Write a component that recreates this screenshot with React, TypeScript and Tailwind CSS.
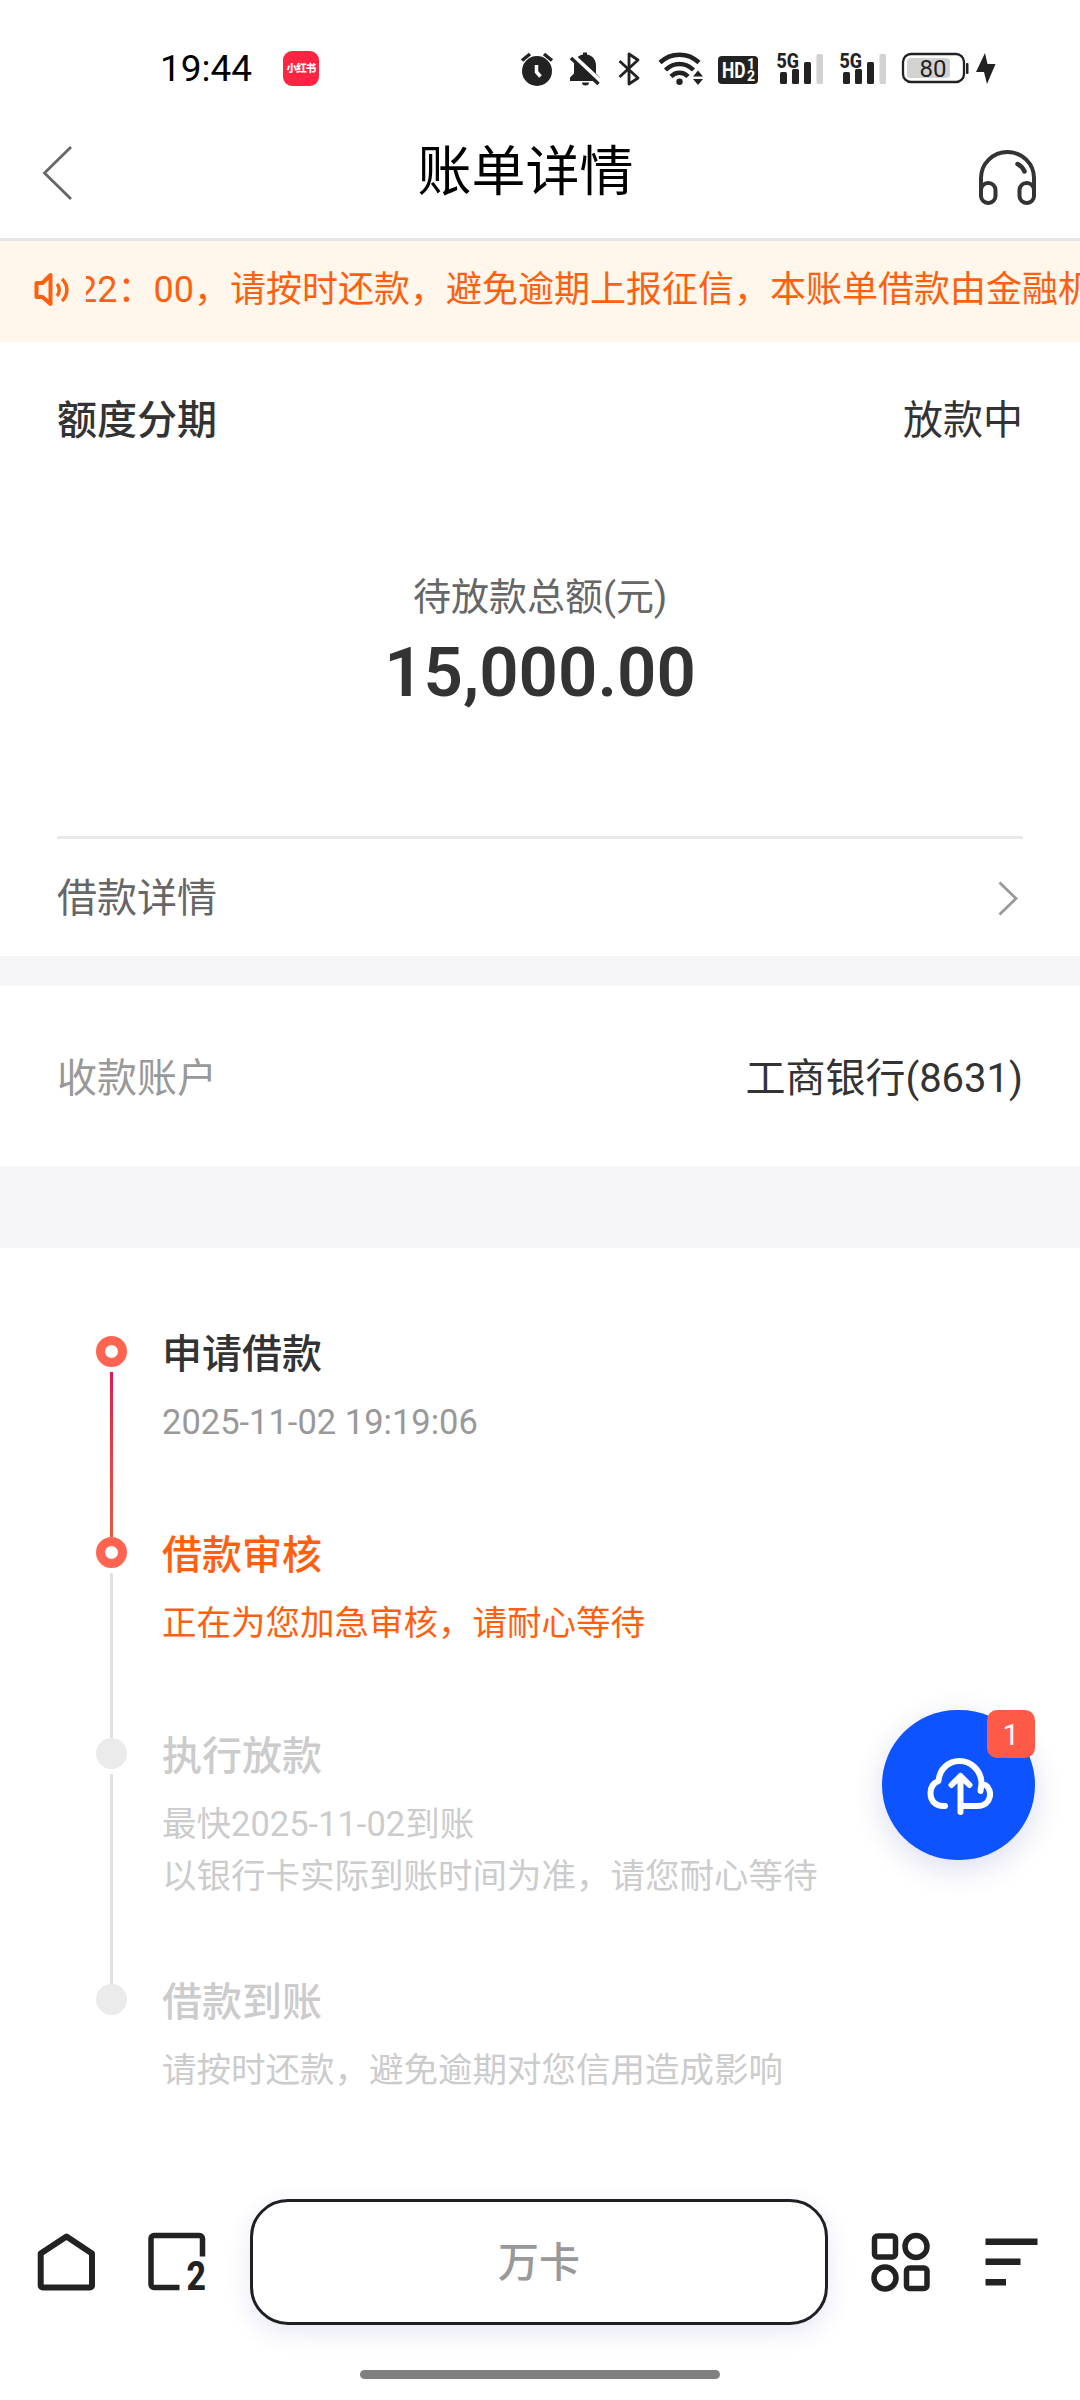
import type { ReactNode } from "react";

type StepState = "done" | "active" | "pending";

interface Step {
  title: string;
  lines: string[];
  state: StepState;
  height: string;
}

const steps: Step[] = [
  { title: "申请借款", lines: ["2025-11-02 19:19:06"], state: "done", height: "h-[201px]" },
  { title: "借款审核", lines: ["正在为您加急审核，请耐心等待"], state: "active", height: "h-[201px]" },
  {
    title: "执行放款",
    lines: ["最快2025-11-02到账", "以银行卡实际到账时间为准，请您耐心等待"],
    state: "pending",
    height: "h-[246px]",
  },
  { title: "借款到账", lines: ["请按时还款，避免逾期对您信用造成影响"], state: "pending", height: "h-[150px]" },
];

const titleColor = {
  done: "text-[#333333]",
  active: "text-[#ff6010]",
  pending: "text-[#cccccc]",
};

const lineColor = {
  done: "text-[#999999]",
  active: "text-[#ff6010]",
  pending: "text-[#cccccc]",
};

function StatusIcons() {
  return (
    <svg width="490" height="50" viewBox="510 45 490 50" fill="#222" className="block">
      {/* alarm */}
      <circle cx="537" cy="71" r="15" />
      <path d="M522 60.500l8-6.500M544 54l8 6.500" stroke="#222" strokeWidth="3.500" />
      <path d="M536.500 65v7l4 4.500" stroke="#fff" strokeWidth="3.500" fill="none" />
      {/* muted bell */}
      <path d="M583 52.500h4v2c6 1 9 6 9 11v8l4 4v3.500h-30V77.500l4-4v-8c0-5 3-10 9-11z" />
      <path d="M582 82.500h7a3.500 3 0 0 1-7 0z" />
      <path d="M572 54.500l29 27" stroke="#fff" strokeWidth="4" />
      <path d="M571 58l27.500 26" stroke="#222" strokeWidth="3.500" />
      {/* bluetooth */}
      <path d="M619.500 61l18.500 17-9 6V54l9 6-18.500 17" stroke="#222" strokeWidth="2.800" fill="none" strokeLinejoin="round" />
      {/* wifi */}
      <g stroke="#222" strokeWidth="4.500" fill="none">
        <path d="M660 62.500c11-10.500 28-10.500 39 0" />
        <path d="M665.500 70c8-8 20-8 28 0" />
        <path d="M671 76.500c5-5 12-5 17 0" />
      </g>
      <circle cx="679.500" cy="81.800" r="3.200" />
      <path d="M693 76.500l5-6 5 6zM693 79l5 6 5-6z" />
      {/* HD */}
      <rect x="718" y="56" width="40" height="28" rx="4" />
      <g fill="#fff" fontFamily="Roboto, sans-serif" fontWeight="700">
        <text x="722" y="78" fontSize="22" textLength="23.500" lengthAdjust="spacingAndGlyphs">HD</text>
        <text x="747" y="69" fontSize="14">1</text>
        <text x="747" y="81" fontSize="14">2</text>
      </g>
      {/* signal bars */}
      {[777, 840].map((x) => (
        <g key={x}>
          <text x={x - 0.5} y="67.500" fontSize="21" fontWeight="800" fontFamily="Roboto, sans-serif" textLength="22.500" lengthAdjust="spacingAndGlyphs">
            5G
          </text>
          <rect x={x + 3} y="72" width="7" height="12" rx="1.500" />
          <rect x={x + 15} y="69" width="7" height="15" rx="1.500" />
          <rect x={x + 27} y="62" width="7" height="22" rx="1.500" />
          <rect x={x + 39.5} y="54" width="6.500" height="30" rx="1.500" fill="#d2d2d2" />
        </g>
      ))}
      {/* battery */}
      <rect x="903" y="54" width="61" height="28" rx="8" fill="none" stroke="#222" strokeWidth="2.300" />
      <rect x="907" y="58" width="43" height="20" rx="4" fill="#d2d2d2" />
      <text x="933" y="77" fontSize="24" textAnchor="middle" fontFamily="Roboto, sans-serif">80</text>
      <rect x="966" y="63" width="2.500" height="11" rx="1" />
      <path d="M985 53l-9 19h8l3 12 8.500-20h-8z" />
    </svg>
  );
}

function StatusBar() {
  return (
    <div className="flex h-[104px] items-start">
      <span className="mt-[47px] ml-[160px] w-[123px] text-[37px] leading-[44px] font-[450] text-black">19:44</span>
      <span className="mt-[51px] flex h-[35px] w-9 items-center justify-center rounded-[9px] bg-[#ff2442] text-[10.500px] font-black tracking-[-0.800px] whitespace-nowrap text-white">
        小红书
      </span>
      <span className="mt-[45px] ml-[191px]">
        <StatusIcons />
      </span>
    </div>
  );
}

function Header() {
  return (
    <header className="flex h-[137px] items-center border-b-[3px] border-[#e6e6e6] pr-[42px] pl-[39px]">
      <svg width="36" height="60" viewBox="0 0 36 60" className="mt-[3px] block" fill="none" stroke="#666" strokeWidth="2.800">
        <path d="M32 4L5.500 30 32 56" />
      </svg>
      <h1 className="mt-1 mr-[2px] flex-1 text-center text-[54px] leading-[60px] text-black">账单详情</h1>
      <svg width="60" height="60" viewBox="978 148 60 60" className="mt-[14px] block" fill="none" stroke="#333" strokeWidth="4">
        <path d="M981 192v-14a26.500 26 0 0 1 53 0v14" />
        <rect x="981" y="183" width="14.500" height="20" rx="7" />
        <rect x="1019.500" y="183" width="14.500" height="20" rx="7" />
        <path d="M1017.500 164c3 1.500 5.500 4 7 7.500" strokeWidth="4.500" strokeLinecap="round" />
      </svg>
    </header>
  );
}

function Notice() {
  return (
    <div className="flex h-[101px] items-center bg-[#fff7eb] pb-[4px] pl-[33px] text-[#ff6010]">
      <svg width="38" height="38" viewBox="0 0 38 38" className="mr-[15px] block shrink-0" fill="none" stroke="currentColor" strokeWidth="4">
        <path d="M3.500 12h6l8-8v29l-8-7h-6z" strokeLinejoin="round" />
        <path d="M24 13c3 3 3 9 0 12M29 8c6.500 6 6.500 16 0 22" strokeWidth="3.500" />
      </svg>
      <div className="flex-1 overflow-hidden">
        <p className="-ml-[9px] text-[36px] leading-[50px] whitespace-nowrap">
          22：00，请按时还款，避免逾期上报征信，本账单借款由金融机
        </p>
      </div>
    </div>
  );
}

function Row({ label, children }: { label: ReactNode; children: ReactNode }) {
  return (
    <div className="flex items-center justify-between text-[40px] leading-[56px]">
      {label}
      {children}
    </div>
  );
}

function Summary() {
  return (
    <section className="flex h-[614px] flex-col px-[57px] pt-[51px]">
      <Row label={<span className="font-medium text-[#333333]">额度分期</span>}>
        <span className="text-[#333333]">放款中</span>
      </Row>
      <p className="mt-[120px] text-center text-[38px] leading-[56px] text-[#666666]">待放款总额(元)</p>
      <p className="mt-2 text-center text-[69px] leading-[80px] font-semibold text-[#333333]">15,000.00</p>
      <div className="mt-[123px] border-t-[3px] border-[#e8e8e8] pt-8">
        <Row label={<span className="text-[#666666]">借款详情</span>}>
          <svg width="28" height="36" viewBox="0 0 28 36" className="block" fill="none" stroke="#999" strokeWidth="2.800">
            <path d="M4.500 1.500L21 17.500 4.500 33.500" />
          </svg>
        </Row>
      </div>
    </section>
  );
}

function Dot({ state }: { state: StepState }) {
  if (state === "pending") return <span className="h-[31px] w-[31px] shrink-0 rounded-full bg-[#ebebeb]" />;
  return <span className="h-[31px] w-[31px] shrink-0 rounded-full border-[9px] border-[#ff6450] bg-white" />;
}

function Timeline() {
  return (
    <section className="h-[917px] pt-[88px] pl-24">
      {steps.map((step, i) => (
        <div key={step.title} className={`flex ${step.height}`}>
          <div className="flex w-[31px] flex-col items-center">
            <Dot state={step.state} />
            {i < steps.length - 1 && (
              <span
                className={
                  step.state === "done"
                    ? "mt-[5px] w-[3px] flex-1 bg-linear-to-b from-[#e0184e] to-[#f0553c]"
                    : "mt-[5px] w-[3px] flex-1 bg-[#e1e1e1]"
                }
              />
            )}
          </div>
          <div className="-mt-[9px] ml-[35px]">
            <h2 className={`text-[40px] leading-[56px] font-medium ${titleColor[step.state]}`}>{step.title}</h2>
            <div className="mt-[13px]">
              {step.lines.map((line) => (
                <p key={line} className={`text-[34.500px] leading-[52px] whitespace-nowrap ${lineColor[step.state]}`}>
                  {line}
                </p>
              ))}
            </div>
          </div>
        </div>
      ))}
    </section>
  );
}

function UploadButton() {
  return (
    <div className="absolute top-[1710px] left-[882px] flex h-[150px] w-[153px] items-center justify-center rounded-full bg-[#0d53ff] shadow-[0_9px_30px_rgba(40,50,160,0.16)]">
      <svg width="68" height="60" viewBox="924.5 1755 68 60" className="overflow-visible" fill="none" stroke="#fff" strokeWidth="6" strokeLinecap="round" strokeLinejoin="round">
        <path d="M944.500 1806c-9 1-14.500-5-14.500-13 0-6 3-10 8-12 1-12 10-20 21-20s22 9 22 23l-1 7c0-5 2-7 5-6 7 4 7 21-8 21h-15" />
        <path d="M960 1812v-36M951 1785l9-9 9 9" />
      </svg>
      <span className="absolute top-0 right-0 flex h-12 w-12 items-center justify-center rounded-[10px] bg-[#ff5a48] text-[30px] text-white">
        1
      </span>
    </div>
  );
}

function BottomBar() {
  return (
    <footer className="flex h-[235px] flex-col items-center">
      <div className="mt-[34px] flex h-[126px] w-full items-center">
        <svg width="58" height="58" viewBox="0 0 58 58" className="ml-[37px] block" fill="none" stroke="#222" strokeWidth="6" strokeLinejoin="round">
          <path d="M3.700 20.500L29.500 3.500l25.500 17v32a2 2 0 0 1-2 2H5.700a2 2 0 0 1-2-2z" />
        </svg>
        <svg width="60" height="60" viewBox="0 0 60 60" className="ml-[52px] block overflow-visible" fill="none" stroke="#222" strokeWidth="5.500">
          <path d="M32.500 55.500H7a3 3 0 0 1-3-3V6.500a3 3 0 0 1 3-3h45.500a3 3 0 0 1 3 3v18" />
          <text x="39.500" y="58" fontSize="40" fontWeight="800" fill="#222" stroke="none" fontFamily="Roboto, sans-serif" textLength="19.500" lengthAdjust="spacingAndGlyphs">
            2
          </text>
        </svg>
        <div className="ml-[43px] flex h-[126px] w-[578px] items-center justify-center rounded-[38px] border-[3px] border-[#1f2023] bg-white pt-1 text-[41px] font-medium text-[#999999] shadow-[0_8px_24px_rgba(60,60,190,0.12)]">
          万卡
        </div>
        <svg width="60" height="60" viewBox="0 0 60 60" className="ml-[43px] block" fill="none" stroke="#222" strokeWidth="5.500">
          <rect x="3.500" y="4" width="21" height="21" rx="3" />
          <circle cx="45" cy="14.500" r="11" />
          <circle cx="14" cy="46" r="11" />
          <rect x="35.500" y="36" width="20.500" height="20.500" rx="3" />
        </svg>
        <svg width="54" height="48" viewBox="0 0 54 48" className="ml-[54px] block" fill="#222">
          <rect x="0.500" y="0.500" width="52" height="6.500" />
          <rect x="0.500" y="20.500" width="35" height="6.500" />
          <rect x="0.500" y="41" width="20.500" height="6.500" />
        </svg>
      </div>
      <div className="mt-[45px] h-[9px] w-[360px] rounded-full bg-[#808080]" />
    </footer>
  );
}

export default function App() {
  return (
    <div className="relative h-[2400px] w-[1080px] overflow-hidden bg-white font-[Roboto,'Noto_Sans_CJK_SC',sans-serif]">
      <StatusBar />
      <Header />
      <Notice />
      <Summary />
      <div className="h-[30px] bg-[#f6f6f8]" />
      <section className="h-[180px] px-[57px] pt-[65px]">
        <Row label={<span className="text-[#999999]">收款账户</span>}>
          <span className="text-[#333333]">工商银行(8631)</span>
        </Row>
      </section>
      <div className="h-[82px] bg-[#f6f6f8]" />
      <Timeline />
      <BottomBar />
      <UploadButton />
    </div>
  );
}
